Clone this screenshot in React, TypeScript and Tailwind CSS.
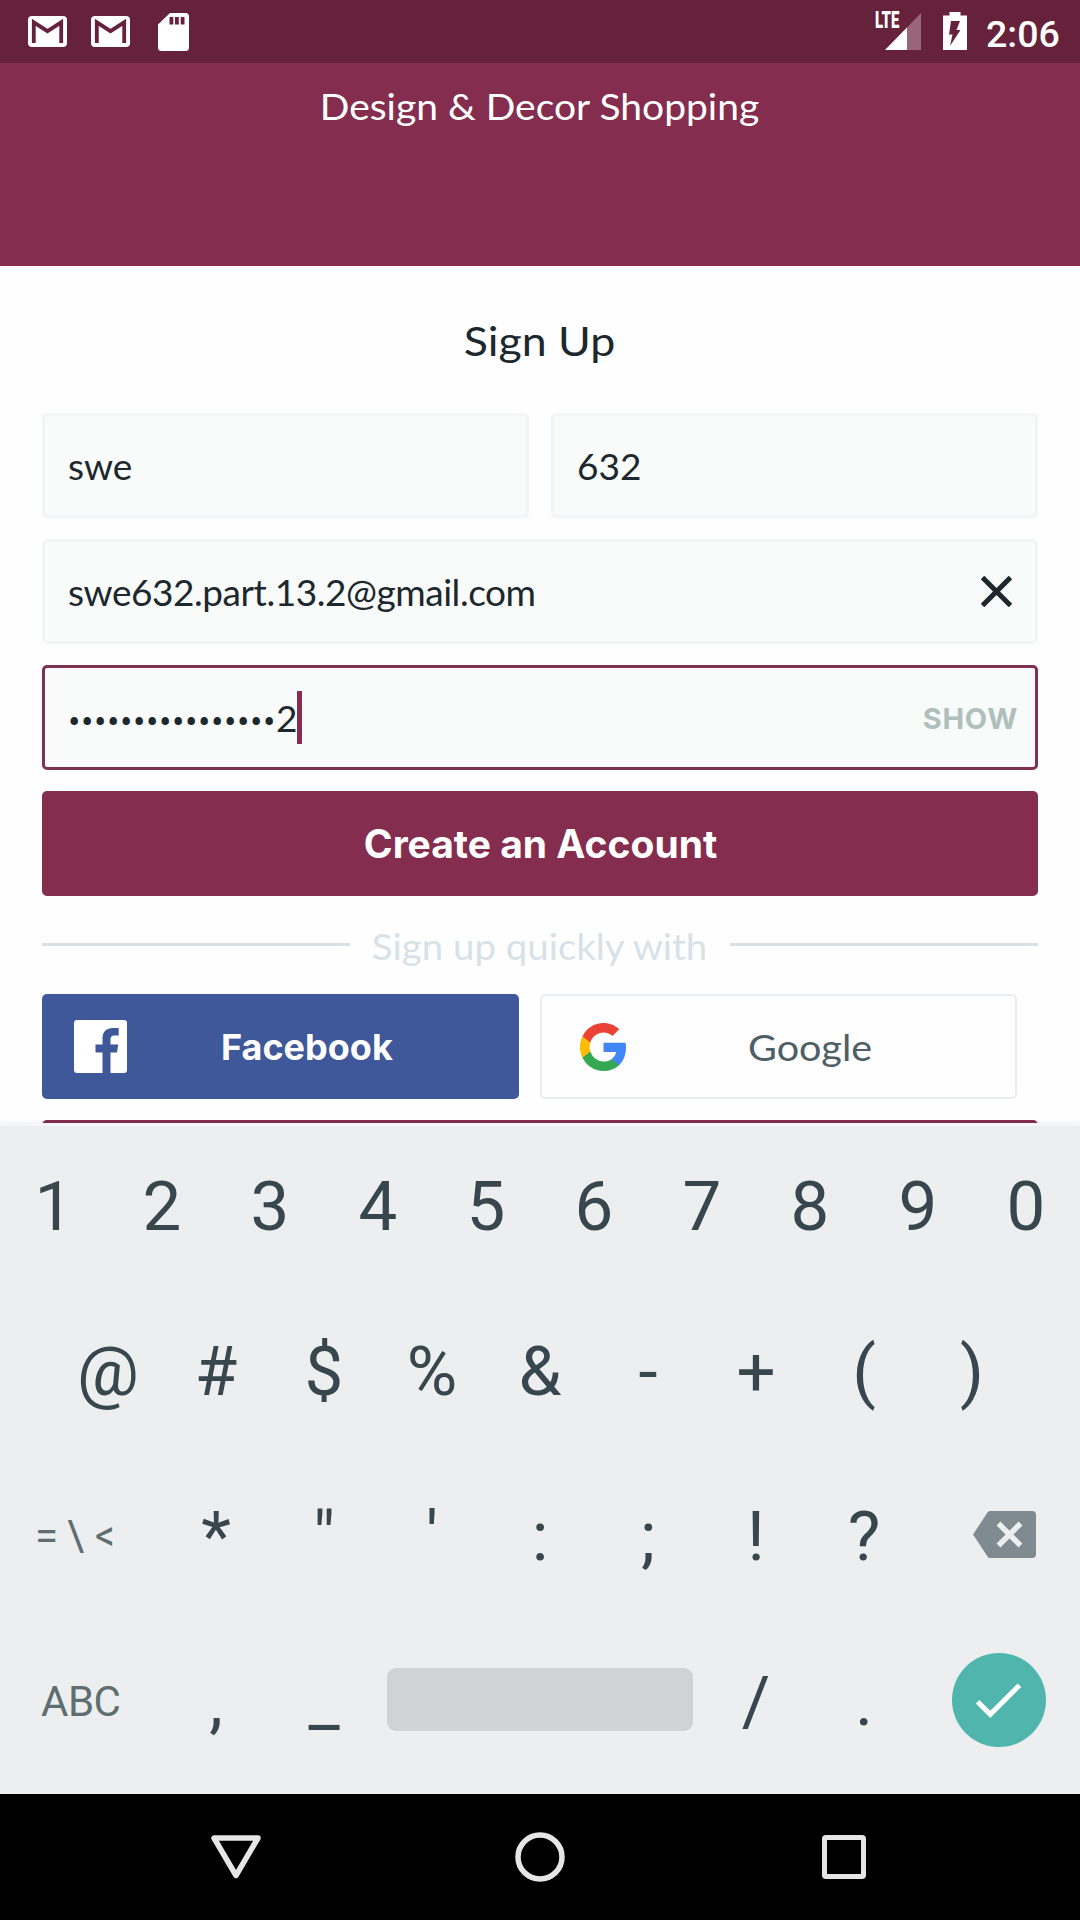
import React from 'react';

const field = 'flex h-[105px] items-center rounded-[5px] border-[3px] bg-[#f9fbfa] pl-[23px]';
const fieldText = 'font-[Lato,sans-serif] text-[37px] leading-[44px] text-[#1c282d] whitespace-nowrap';

function GmailIcon() {
  return (
    <svg width="39" height="31" viewBox="0 0 39 31">
      <rect x="0" y="0" width="39" height="31" rx="4" fill="#fff" />
      <path d="M5.8 27V6.3L19.5 15.2L33.2 6.3V27" fill="none" stroke="#66213b" strokeWidth="3.8" />
    </svg>
  );
}

function SdIcon() {
  return (
    <svg width="31" height="38" viewBox="0 0 31 38">
      <path d="M12 0H27.5Q31 0 31 3.5V34.5Q31 38 27.5 38H3.5Q0 38 0 34.5V11.5Z" fill="#fff" />
      <path d="M11.5 4h3.8v7.5h-3.8zM17 4h3.8v7.5H17zM22.7 4h3.8v7.5h-3.8z" fill="#66213b" />
    </svg>
  );
}

function StatusBar() {
  return (
    <div className="flex h-[63px] items-start bg-[#66213b] text-white">
      <div className="flex pl-[28px] pt-[12px]">
        <div className="mt-[4px]"><GmailIcon /></div>
        <div className="mt-[4px] ml-[24px]"><GmailIcon /></div>
        <div className="mt-[1px] ml-[28px]"><SdIcon /></div>
      </div>
      <div className="ml-auto flex pr-[20px]">
        <div className="relative h-[63px] w-[46px]">
          <svg className="mt-[13px] ml-[10px]" width="36" height="37" viewBox="0 0 36 37">
            <path d="M36 0V37H0Z" fill="#986579" />
            <path d="M22 14.4V37H0Z" fill="#fff" />
          </svg>
          <span className="absolute top-[8px] left-0 origin-left scale-x-[0.65] font-[Roboto,sans-serif] text-[23px] leading-[26px] font-black">LTE</span>
        </div>
        <svg className="mt-[12px] ml-[22px]" width="24" height="38" viewBox="0 0 24 38">
          <path d="M6.5 0H17.5V3.5H24V38H0V3.5H6.5Z" fill="#fff" />
          <path d="M8 9H17L13.5 18H17.5L7 34L9.5 22.5H6Z" fill="#66213b" />
        </svg>
        <span className="ml-[19px] w-[74px] pt-[12px] font-[Roboto,sans-serif] text-[37.5px] leading-[44px] font-medium whitespace-nowrap">2:06</span>
      </div>
    </div>
  );
}

function GoogleIcon() {
  return (
    <svg width="46" height="48" viewBox="0 0 46 47" preserveAspectRatio="none">
      <path fill="#4285f4" d="M46 24.03c0-1.67-.14-3.27-.39-4.81H23.5v9.1h12.64c-.55 2.94-2.2 5.43-4.68 7.1v5.9h7.58C43.47 37.24 46 31.2 46 24.03z" />
      <path fill="#34a853" d="M23.5 47c6.33 0 11.64-2.1 15.54-5.68l-7.58-5.9c-2.1 1.41-4.79 2.25-7.96 2.25-6.12 0-11.3-4.14-13.15-9.7H2.5v6.07C6.38 41.8 14.33 47 23.5 47z" />
      <path fill="#fbbc05" d="M10.35 27.97a14.1 14.1 0 0 1 0-8.97v-6.06H2.5a23.5 23.5 0 0 0 0 21.1z" />
      <path fill="#ea4335" d="M23.5 9.33c3.45 0 6.54 1.19 8.97 3.5l6.72-6.71C35.13 2.33 29.83 0 23.5 0 14.33 0 6.38 5.2 2.5 12.94L10.35 19c1.85-5.56 7.03-9.67 13.15-9.67z" />
    </svg>
  );
}

function Key({ label }: { label: string }) {
  return <div className="flex w-[108px] shrink-0 justify-center pt-px">{label}</div>;
}

function Keyboard() {
  return (
    <div className="flex h-[671px] flex-col bg-[#eceeef] font-[Roboto,sans-serif] text-[69px] leading-[165px] text-[#38474e] shadow-[inset_0_3px_0_#f5f6f7,0_-1px_3px_rgba(0,0,0,0.06)]">
      <div className="flex h-[165px]">
        {['1', '2', '3', '4', '5', '6', '7', '8', '9', '0'].map((k) => <Key key={k} label={k} />)}
      </div>
      <div className="flex h-[165px] pl-[54px]">
        {['@', '#', '$', '%', '&', '-', '+', '(', ')'].map((k) => <Key key={k} label={k} />)}
      </div>
      <div className="flex h-[165px]">
        <div className="flex w-[162px] shrink-0 pl-[35px] text-[42px] leading-[165px] tracking-[1px] text-[#5f6e70]">
          <span className="inline-block origin-left">=</span>
          <span className="ml-[8px]">\</span>
          <span className="ml-[10px] inline-block origin-left scale-x-[0.93]">&lt;</span>
        </div>
        {['*', '"', "'", ':', ';', '!', '?'].map((k) => <Key key={k} label={k} />)}
        <svg className="mt-[58px] ml-[55px]" width="63" height="47" viewBox="0 0 63 47">
          <path d="M17 0H59Q63 0 63 4V43Q63 47 59 47H17Q15.5 47 14.5 45.5L0 23.5L14.5 1.5Q15.5 0 17 0Z" fill="#7f8b90" />
          <path d="M25.5 12.5L47.5 34.5M47.5 12.5L25.5 34.5" stroke="#eceeef" strokeWidth="5.5" />
        </svg>
      </div>
      <div className="flex h-[165px]">
        <div className="w-[162px] shrink-0 pl-[41px] text-[42px] leading-[167px] tracking-[-0.5px] text-[#5f6e70]">ABC</div>
        <Key label="," />
        <Key label="_" />
        <div className="mt-[50px] ml-[9px] h-[63px] w-[306px] rounded-[9px] bg-[#d0d3d6]" />
        <div className="w-[9px]" />
        <Key label="/" />
        <Key label="." />
        <div className="mt-[35px] ml-[34px] flex h-[94px] w-[94px] items-center justify-center rounded-full bg-[#4fb5ad] pr-[2px]">
          <svg width="62" height="62" viewBox="0 0 24 24"><path fill="#fff" d="M9 16.2L4.8 12l-1.4 1.4L9 19 21 7l-1.4-1.4L9 16.2z" /></svg>
        </div>
      </div>
    </div>
  );
}

function NavBar() {
  return (
    <div className="flex h-[126px] bg-black pt-[36px] pl-[206px]">
      <svg width="60" height="54" viewBox="0 0 60 54"><path d="M8 8H52L30 45.5Z" fill="none" stroke="#e6e6e6" strokeWidth="5.5" strokeLinejoin="round" /></svg>
      <svg className="ml-[244px]" width="60" height="54" viewBox="0 0 60 54"><circle cx="30" cy="27" r="22" fill="none" stroke="#e6e6e6" strokeWidth="5.5" /></svg>
      <svg className="ml-[244px]" width="60" height="54" viewBox="0 0 60 54"><rect x="10.5" y="7.5" width="39" height="39" rx="1.5" fill="none" stroke="#e6e6e6" strokeWidth="5" /></svg>
    </div>
  );
}

export default function App() {
  return (
    <div className="flex h-[1920px] w-[1080px] flex-col overflow-hidden bg-[#fefefe]">
      <StatusBar />
      <div className="h-[203px] bg-[#842d4f] text-center font-[Lato,sans-serif] text-[37px] leading-[85px] text-white">
        <span className="inline-block scale-x-[1.054]">Design &amp; Decor Shopping</span>
      </div>
      <div className="h-[857px] overflow-hidden px-[42px]">
        <div className="h-[147px] text-center font-[Lato,sans-serif] text-[41px] leading-[150px] text-[#1c282d]">
          <span className="inline-block scale-x-[1.09]">Sign Up</span>
        </div>
        <div className="flex flex-col gap-[21px]">
          <div className="flex gap-[22px]">
            <div className={`${field} flex-1 border-[#f3f4f5]`}><span className={fieldText}>swe</span></div>
            <div className={`${field} flex-1 border-[#f3f4f5]`}><span className={fieldText}>632</span></div>
          </div>
          <div className={`${field} justify-between border-[#f3f4f5]`}>
            <span className={`${fieldText} tracking-[-0.45px]`}>swe632.part.13.2@gmail.com</span>
            <svg className="mr-[23px]" width="31" height="31" viewBox="0 0 31 31"><path d="M1.5 1.5L29.5 29.5M29.5 1.5L1.5 29.5" stroke="#1c282d" strokeWidth="5" /></svg>
          </div>
          <div className={`${field} border-[#7d3350]`}>
            <span className="translate-y-[5px] font-[Roboto,sans-serif] text-[37px] leading-[44px] tracking-[0.52px] text-[#1c282d]">••••••••••••••••</span>
            <span className={fieldText}>2</span>
            <span className="-ml-px h-[53px] w-[5px] bg-[#842d4f]" />
            <span className="mr-[17px] ml-auto pt-[2px] font-[Inter,sans-serif] text-[29px] leading-[36px] font-bold tracking-[0.7px] text-[#afbfbb]">SHOW</span>
          </div>
          <div className="h-[105px] rounded-[5px] bg-[#842d4f] pl-px text-center font-[Inter,sans-serif] text-[39px] leading-[106px] font-bold text-white">Create an Account</div>
        </div>
        <div className="flex h-[98px] items-center justify-between">
          <div className="mb-px h-[3px] w-[308px] bg-[#d7e2e8]" />
          <span className="mt-[2px] inline-block scale-x-[1.038] font-[Lato,sans-serif] text-[37px] leading-[44px] text-[#d7e2e8]">Sign up quickly with</span>
          <div className="mb-px h-[3px] w-[308px] bg-[#d7e2e8]" />
        </div>
        <div className="flex gap-[21px]">
          <div className="flex h-[105px] w-[477px] items-center rounded-[5px] bg-[#3e5899] pl-[32px]">
            <svg width="53" height="53" viewBox="0 0 53 53">
              <rect width="53" height="53" rx="3" fill="#fff" />
              <path d="M28.5 53V32.5H21.5V24.5H28.5V18.5C28.5 11.5 32.5 8 39 8H44.7V15.5H40.5C37.5 15.5 36.5 17 36.5 19.5V24.5H44.2L43 32.5H36.5V53Z" fill="#3e5899" />
            </svg>
            <span className="ml-[94px] font-[Inter,sans-serif] text-[36px] leading-[44px] font-bold text-white">Facebook</span>
          </div>
          <div className="flex h-[105px] w-[477px] items-center rounded-[5px] border-2 border-[#ebeef1] pl-[38px]">
            <GoogleIcon />
            <span className="ml-[122px] inline-block origin-left scale-x-[1.068] font-[Lato,sans-serif] text-[37px] leading-[44px] text-[#4f5f66]">Google</span>
          </div>
        </div>
        <div className="mt-[21px] h-[105px] rounded-[5px] border-[3px] border-[#842d4f]" />
      </div>
      <Keyboard />
      <NavBar />
    </div>
  );
}
